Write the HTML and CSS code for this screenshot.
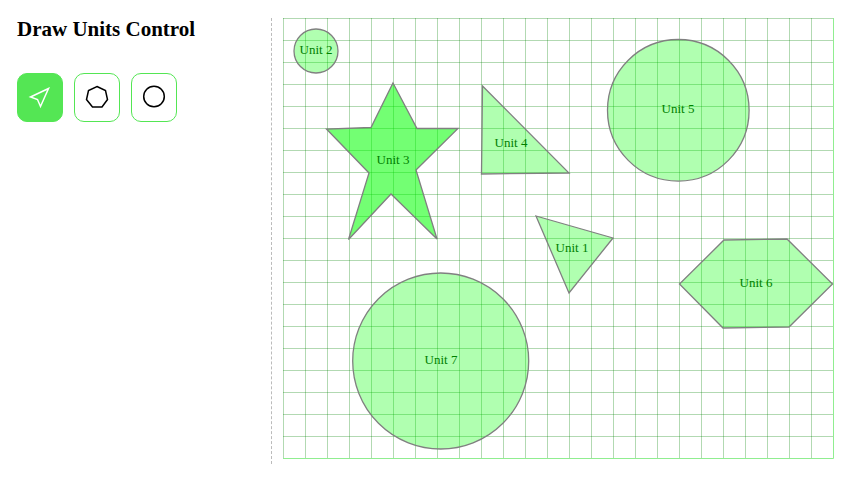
FILE: index.html
```html
<!DOCTYPE html>
<html lang="en">
<head>
<meta charset="utf-8">
<title>Draw Units Control</title>
<link rel="stylesheet" href="styles.css">
</head>
<body>
<main class="app">
  <aside class="panel">
    <h1 class="title">Draw Units Control</h1>
    <div class="tools">
      <button class="tool active" type="button" aria-label="Select" aria-pressed="true">
        <svg class="icon" viewBox="0 0 24 24"><path d="M20.500 3.500L2.500 12L9.500 14.500L12.500 21.500Z"/></svg>
      </button>
      <button class="tool" type="button" aria-label="Polygon" aria-pressed="false">
        <svg class="icon" viewBox="0 0 24 24"><path d="M12 1.500L20.500 5.500L22.500 14.500L17 22H7.500L1.500 14.500L3.500 5.500Z"/></svg>
      </button>
      <button class="tool" type="button" aria-label="Circle" aria-pressed="false">
        <svg class="icon" viewBox="0 0 24 24"><circle cx="12" cy="11.500" r="10.300"/></svg>
      </button>
    </div>
  </aside>
  <section class="stage">
    <svg class="board" viewBox="0 0 551 441">
      <defs>
        <pattern id="grid" width="22" height="22" patternUnits="userSpaceOnUse">
          <rect class="line" width="22" height="1"/>
          <rect class="line" width="1" height="22"/>
        </pattern>
      </defs>
      <rect width="550" height="440" fill="url(#grid)"/>
      <path class="edge" d="M550.5 0V440.5H0"/>
      <g class="unit"><polygon points="253,198 330,220 286,275"/><text x="289" y="234">Unit 1</text></g>
      <g class="unit"><circle cx="33" cy="33" r="22"/><text x="33" y="36">Unit 2</text></g>
      <g class="unit selected"><polygon points="110,65 134,110.5 175,110.500 133,152 154,221 108,176 65.500,221.500 86,155 43.500,111 88,109.500"/><text x="110" y="146">Unit 3</text></g>
      <g class="unit"><polygon points="199.500,68 286,155 198.500,156"/><text x="228" y="129">Unit 4</text></g>
      <g class="unit"><circle cx="395.300" cy="92.300" r="70.800"/><text x="395" y="95">Unit 5</text></g>
      <g class="unit"><polygon points="441,222 504,221 549.500,266 506,309 440,310 396.500,266"/><text x="473" y="269">Unit 6</text></g>
      <g class="unit"><circle cx="157.700" cy="343" r="88"/><text x="158" y="346">Unit 7</text></g>
    </svg>
  </section>
</main>
</body>
</html>
```
FILE: styles.css
```css
* { box-sizing: border-box; }
body {
  margin: 0;
  background: #fff;
  color: #000;
  font-family: "Liberation Serif", "Times New Roman", serif;
}
.app {
  display: flex;
  padding: 18px 26px 18px 17px;
}
.panel {
  flex: none;
  width: 255px;
  border-right: 1px dashed #bbb;
}
.title {
  margin: 0 0 32px;
  font-size: 21px;
  line-height: 23px;
}
.tools { display: flex; gap: 11px; }
.tool {
  display: flex;
  align-items: center;
  justify-content: center;
  width: 46px;
  height: 49px;
  padding: 0 0 2px;
  border: 1px solid #54e654;
  border-radius: 10px;
  background: #fff;
  color: #000;
  cursor: pointer;
}
.tool.active { background: #54e654; color: #fff; }
.icon {
  width: 24px;
  height: 24px;
  fill: none;
  stroke: currentColor;
  stroke-width: 1.5;
}
.stage {
  flex: 1;
  min-width: 0;
  padding: 0 0 5px 11px;
}
.board { display: block; width: 100%; height: auto; }
.line { fill: rgba(0, 128, 0, 0.3); }
.edge { fill: none; stroke: #90ee90; stroke-width: 1; }
.unit { fill: rgba(0, 255, 0, 0.31); stroke: gray; stroke-width: 1.3; }
.selected { fill: rgba(0, 255, 0, 0.55); }
.unit text {
  fill: green;
  stroke: none;
  font-size: 13px;
  text-anchor: middle;
}
```
